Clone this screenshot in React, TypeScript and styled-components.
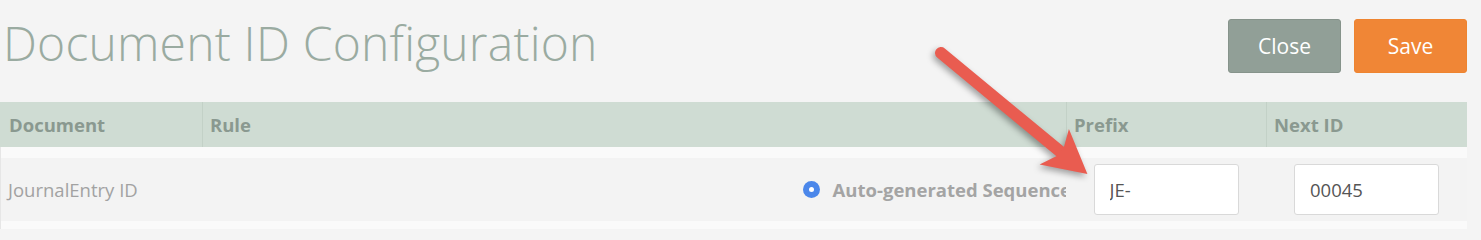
import styled, { createGlobalStyle } from "styled-components";

const GlobalStyle = createGlobalStyle`
  body {
    margin: 0;
    background: #f4f4f4;
    font-family: "Open Sans", "Noto Sans", sans-serif;
  }
`;

const Page = styled.div`
  position: relative;
  width: 1481px;
  height: 229px;
  overflow: hidden;
`;

const TopBar = styled.header`
  display: flex;
  align-items: center;
  justify-content: space-between;
  height: 54px;
  padding: 19px 14px 0 3px;
`;

const Title = styled.h1`
  margin: 0 0 7px;
  font-size: 48px;
  font-weight: 300;
  letter-spacing: 0.2px;
  line-height: 60px;
  color: #9aaba1;
`;

const Actions = styled.div`
  display: flex;
  gap: 13px;
`;

const Button = styled.button<{ $variant: "close" | "save" }>`
  width: 113px;
  height: 54px;
  border: 1px solid ${(p) => (p.$variant === "close" ? "#86938b" : "#ee8430")};
  border-radius: 3px;
  background: ${(p) => (p.$variant === "close" ? "#919f97" : "#f08636")};
  color: #fff;
  font-family: inherit;
  font-size: 21px;
  cursor: pointer;
`;

const Table = styled.section`
  margin: 29px 14px 0 0;
`;

const HeadRow = styled.div`
  display: grid;
  grid-template-columns: 202px 864px 200px 1fr;
  height: 45px;
  background: #cfdcd3;
`;

const HeadCell = styled.div<{ $first?: boolean }>`
  display: flex;
  align-items: center;
  padding-left: ${(p) => (p.$first ? 9 : 7)}px;
  border-left: ${(p) => (p.$first ? "none" : "1px solid #c3d1c7")};
  font-size: 18.5px;
  font-weight: 700;
  color: #8a9990;
`;

const Body = styled.div`
  padding-top: 11px;
  background: #fafafa;
  border-left: 1px solid #e6e6e6;
  height: 71px;
`;

const Row = styled.div`
  display: grid;
  grid-template-columns: 201px 864px 200px 187px;
  height: 63px;
  background: #f3f3f3;
`;

const Cell = styled.div<{ $align?: "start" | "center" | "end"; $pad?: number }>`
  display: flex;
  align-items: center;
  justify-content: ${(p) =>
    p.$align === "center" ? "center" : p.$align === "end" ? "flex-end" : "flex-start"};
  padding-left: ${(p) => p.$pad ?? 0}px;
  overflow: hidden;
  white-space: nowrap;
`;

const DocName = styled.span`
  font-size: 18.5px;
  color: #a2a2a2;
`;

const Radio = styled.span`
  flex: none;
  width: 17px;
  height: 17px;
  border-radius: 50%;
  background: #4b87ea;
  display: flex;
  align-items: center;
  justify-content: center;

  &::after {
    content: "";
    width: 5px;
    height: 5px;
    border-radius: 50%;
    background: #fff;
  }
`;

const RuleLabel = styled.span`
  margin-left: 13px;
  margin-right: -5px;
  font-size: 18.5px;
  font-weight: 700;
  color: #a4a4a4;
`;

const Input = styled.input`
  box-sizing: border-box;
  width: 145px;
  height: 51px;
  padding: 0 15px;
  border: 1px solid #d9d9d9;
  border-radius: 3px;
  background: #fff;
  font-family: inherit;
  font-size: 18.5px;
  color: #555;
  outline: none;
`;

const ArrowLayer = styled.svg`
  position: absolute;
  left: 0;
  top: 0;
  pointer-events: none;
  filter: drop-shadow(-2px 3px 3px rgba(0, 0, 0, 0.35));
`;

const Arrow = () => {
  const L = 190;
  return (
    <ArrowLayer width="1481" height="229" viewBox="0 0 1481 229">
      <g transform="translate(941 53) rotate(39.6)" fill="#e95c50">
        <line x1="0" y1="0" x2={L - 32} y2="0" stroke="#e95c50" strokeWidth="12" strokeLinecap="round" />
        <polygon points={`${L},0 ${L - 43},-23 ${L - 35},-5 ${L - 35},5 ${L - 43},23`} />
      </g>
    </ArrowLayer>
  );
};

export default function App() {
  return (
    <Page>
      <GlobalStyle />
      <TopBar>
        <Title>Document ID Configuration</Title>
        <Actions>
          <Button $variant="close">Close</Button>
          <Button $variant="save">Save</Button>
        </Actions>
      </TopBar>
      <Table>
        <HeadRow>
          <HeadCell $first>Document</HeadCell>
          <HeadCell>Rule</HeadCell>
          <HeadCell>Prefix</HeadCell>
          <HeadCell>Next ID</HeadCell>
        </HeadRow>
        <Body>
          <Row>
            <Cell $pad={7}>
              <DocName>JournalEntry ID</DocName>
            </Cell>
            <Cell $align="end">
              <Radio />
              <RuleLabel>Auto-generated Sequence</RuleLabel>
            </Cell>
            <Cell $align="center">
              <Input defaultValue="JE-" />
            </Cell>
            <Cell $pad={28}>
              <Input defaultValue="00045" />
            </Cell>
          </Row>
        </Body>
      </Table>
      <Arrow />
    </Page>
  );
}
